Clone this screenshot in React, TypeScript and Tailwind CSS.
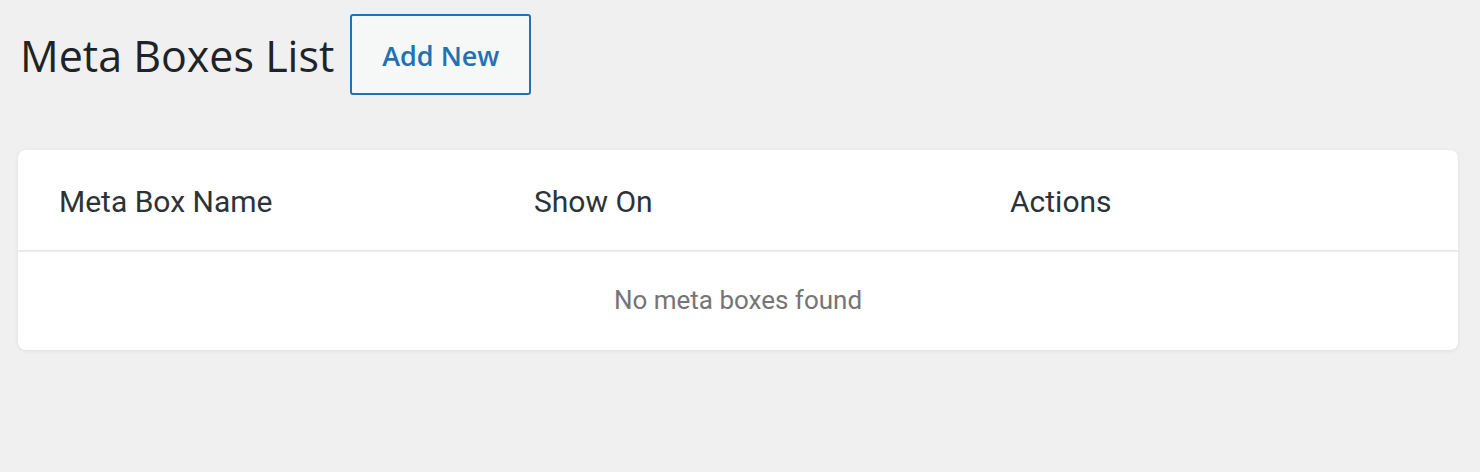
export default function App() {
  return (
    <div className="min-h-[472px] w-full bg-[#f0f0f1] pl-[18px] pr-[22px] pt-[14px]" style={{ fontFamily: "Roboto, sans-serif" }}>
      <div className="flex items-center gap-[16px]">
        <h1 className="pl-[2px] pt-[2px] text-[43px] font-normal leading-none text-[#1d2327]" style={{ fontFamily: '"Open Sans", sans-serif' }}>
          Meta Boxes List
        </h1>
        <button className="h-[81px] w-[181px] rounded-[3px] border-2 border-[#2271b1] bg-[#f6f7f7] pt-[3px] text-[27px] font-semibold text-[#2271b1]" style={{ fontFamily: '"Open Sans", sans-serif' }}>
          Add New
        </button>
      </div>

      <div className="mt-[55px] overflow-hidden rounded-[8px] bg-white shadow-[0_1px_4px_rgba(0,0,0,0.08)]">
        <div className="grid h-[102px] grid-cols-[475px_476px_1fr] items-center border-b-2 border-[#ebebeb] pl-[41px] pt-[2px] text-[30px] text-[#2c3338]">
          <div>Meta Box Name</div>
          <div>Show On</div>
          <div>Actions</div>
        </div>
        <div className="flex h-[98px] items-center justify-center pb-[2px] text-[26px] text-[#757575]">
          No meta boxes found
        </div>
      </div>
    </div>
  );
}
